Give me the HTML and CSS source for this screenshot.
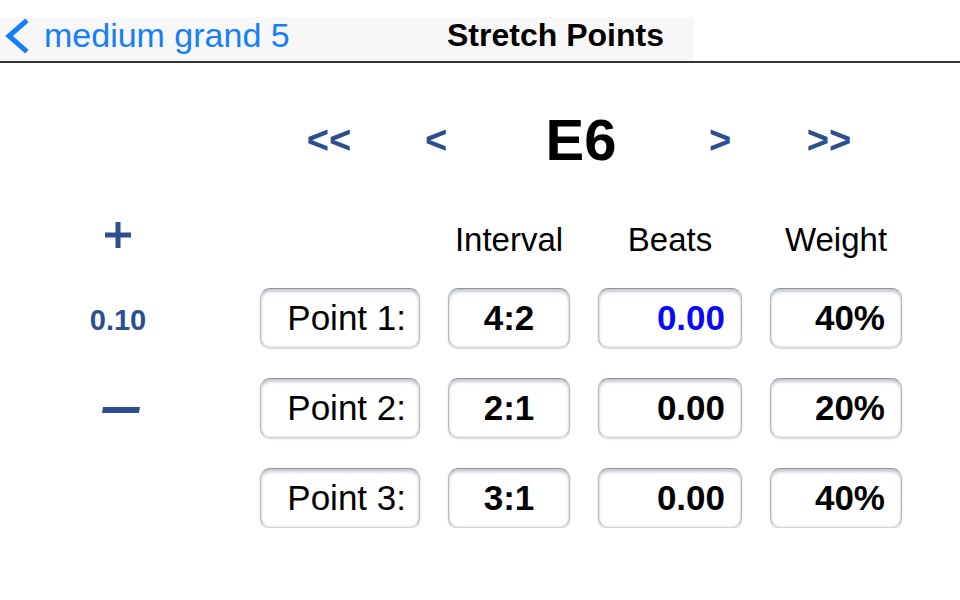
FILE: index.html
```html
<!DOCTYPE html>
<html lang="en">
<head>
    <meta charset="UTF-8">
    <meta name="viewport" content="width=device-width, initial-scale=1.0">
    <title>Stretch Points</title>
    <link rel="stylesheet" href="styles.css">
</head>
<body>
    <header class="topbar">
        <div class="navbar">
            <a class="back" href="#">
                <svg class="chevron" width="26" height="34" viewBox="0 0 26 34">
                    <polyline points="22,3 6,17 22,31" fill="none" stroke="#157efb" stroke-width="5" stroke-linecap="square"/>
                </svg>
                <span>medium grand 5</span>
            </a>
            <h1 class="title">Stretch Points</h1>
        </div>
    </header>

    <div class="stepper">
        <button class="arrow">&lt;&lt;</button>
        <button class="arrow">&lt;</button>
        <div class="note">E6</div>
        <button class="arrow">&gt;</button>
        <button class="arrow">&gt;&gt;</button>
    </div>

    <div class="points">
        <!-- header row -->
        <div class="side">
            <button class="side-btn plus">
                <svg width="26" height="26" viewBox="0 0 26 26">
                    <rect x="10.5" y="0" width="5" height="26" fill="#2e4f8f"/>
                    <rect x="0" y="10.5" width="26" height="5" fill="#2e4f8f"/>
                </svg>
            </button>
        </div>
        <div></div>
        <div class="col-head">Interval</div>
        <div class="col-head">Beats</div>
        <div class="col-head">Weight</div>

        <!-- point 1 -->
        <div class="side"><span class="step">0.10</span></div>
        <div class="field label">Point 1:</div>
        <div class="field interval">4:2</div>
        <div class="field value active">0.00</div>
        <div class="field value">40%</div>

        <!-- point 2 -->
        <div class="side">
            <button class="side-btn minus">
                <svg width="38" height="6" viewBox="0 0 38 6">
                    <polygon points="1,0 38,0 37,6 0,6" fill="#2e4f8f"/>
                </svg>
            </button>
        </div>
        <div class="field label">Point 2:</div>
        <div class="field interval">2:1</div>
        <div class="field value">0.00</div>
        <div class="field value">20%</div>

        <!-- point 3 -->
        <div class="side"></div>
        <div class="field label">Point 3:</div>
        <div class="field interval">3:1</div>
        <div class="field value">0.00</div>
        <div class="field value">40%</div>
    </div>
</body>
</html>
```

FILE: styles.css
```css
body {
    font-family: "Liberation Sans", Arial, Helvetica, sans-serif;
    margin: 0;
    padding: 0;
    background-color: #fff;
    color: #000;
}

button {
    font-family: inherit;
    background: none;
    border: none;
    padding: 0;
    cursor: pointer;
}

/* top navigation bar */
.topbar {
    padding-top: 17px;
    border-bottom: 2px solid #2f343d;
}
.navbar {
    width: 694px;
    height: 44px;
    background-color: #f7f7f7;
    display: flex;
    align-items: flex-start;
}
.back {
    width: 447px;
    display: flex;
    align-items: flex-start;
    text-decoration: none;
    color: #157efb;
    font-size: 34px;
    line-height: 36px;
}
.chevron {
    margin-left: 3px;
    margin-top: 2px;
    margin-right: 15px;
}
.title {
    margin: 0;
    font-size: 32px;
    line-height: 36px;
    font-weight: bold;
}

/* note stepper */
.stepper {
    margin-top: 47px;
    padding-left: 276px;
    display: grid;
    grid-template-columns: 106px 108px 182px 96px 122px;
    height: 60px;
    align-items: center;
}
.arrow {
    color: #2e4f8f;
    font-size: 38px;
    font-weight: bold;
    line-height: 60px;
    text-align: center;
}
.note {
    font-size: 58px;
    font-weight: bold;
    line-height: 60px;
    text-align: center;
}

/* points table */
.points {
    margin-top: 52px;
    display: grid;
    grid-template-columns: 232px 160px 122px 144px 132px;
    grid-template-rows: 36px 60px 60px 60px;
    column-gap: 28px;
    row-gap: 30px;
}
.side {
    display: flex;
    justify-content: center;
    align-items: center;
}
.side-btn {
    display: flex;
}
.plus {
    align-self: flex-start;
    margin-left: 4px;
}
.minus {
    margin-left: 10px;
    margin-top: 4px;
}
.step {
    color: #2e4f8f;
    font-size: 29px;
    font-weight: bold;
    margin-left: 4px;
    margin-top: 4px;
}
.col-head {
    font-size: 33px;
    line-height: 36px;
    text-align: center;
}
.field {
    box-sizing: border-box;
    height: 60px;
    background: #fff;
    border: 1px solid #b3bac4;
    border-top-color: #8a94a3;
    border-bottom-color: #cfd3da;
    border-radius: 10px;
    box-shadow: inset 0 3px 3px rgba(60, 70, 90, 0.28), inset 0 -1px 2px rgba(60, 70, 90, 0.12), 0 1px 2px rgba(180, 188, 198, 0.6);
    font-size: 35px;
    line-height: 58px;
    padding: 0 16px;
}
.label {
    font-weight: normal;
    text-align: right;
    padding-right: 13px;
}
.interval {
    font-weight: bold;
    text-align: center;
}
.value {
    font-weight: bold;
    text-align: right;
}
.value.active {
    color: #0a0af5;
}
```
